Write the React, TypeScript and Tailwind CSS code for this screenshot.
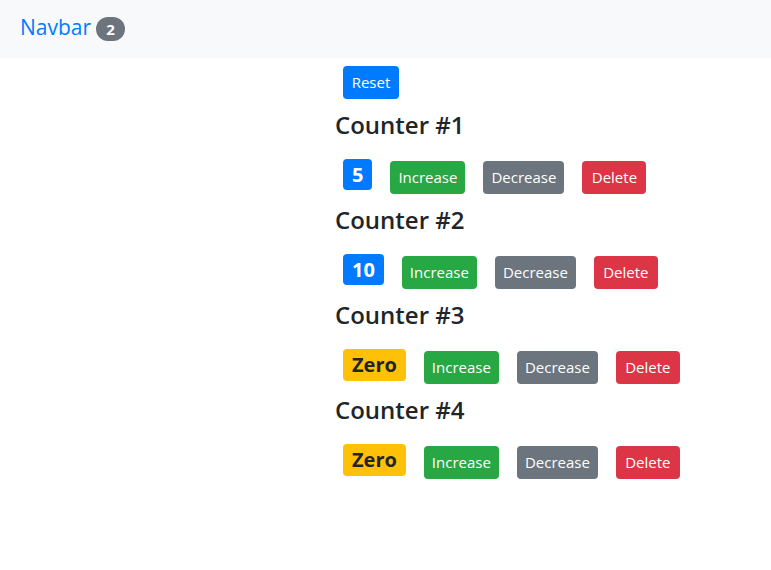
import React, { useState } from 'react';

type Counter = { id: number; value: number };

const font = { fontFamily: '"Open Sans", "Noto Sans", sans-serif' };

const CounterRow: React.FC<{
  counter: Counter;
  onIncrease: (id: number) => void;
  onDecrease: (id: number) => void;
  onDelete: (id: number) => void;
}> = ({ counter, onIncrease, onDecrease, onDelete }) => {
  const zero = counter.value === 0;
  return (
    <div>
      <h4 className="h-[35px] text-[24px] leading-[35px] font-semibold text-[#212529]">
        Counter #{counter.id}
      </h4>
      <div className="flex h-[60px] items-start gap-[18px] pl-2">
        <span
          className={
            zero
              ? 'mt-[17px] flex h-[32px] items-center rounded-[4px] bg-[#ffc107] px-[9px] text-[20px] font-bold leading-none text-[#212529]'
              : 'mt-[17px] flex h-[31px] items-center rounded-[4px] bg-[#007bff] px-[9px] text-[20px] font-bold leading-none text-white'
          }
        >
          {zero ? 'Zero' : counter.value}
        </span>
        <button
          onClick={() => onIncrease(counter.id)}
          className="mt-[19px] h-[33px] w-[75px] rounded-[4px] bg-[#28a745] text-[15px] text-white"
        >
          Increase
        </button>
        <button
          onClick={() => onDecrease(counter.id)}
          className="mt-[19px] h-[33px] w-[81px] rounded-[4px] bg-[#6c757d] text-[15px] text-white"
        >
          Decrease
        </button>
        <button
          onClick={() => onDelete(counter.id)}
          className="mt-[19px] h-[33px] w-[64px] rounded-[4px] bg-[#dc3545] text-[15px] text-white"
        >
          Delete
        </button>
      </div>
    </div>
  );
};

export default function App() {
  const [counters, setCounters] = useState<Counter[]>([
    { id: 1, value: 5 },
    { id: 2, value: 10 },
    { id: 3, value: 0 },
    { id: 4, value: 0 },
  ]);

  const increase = (id: number) =>
    setCounters(counters.map((c) => (c.id === id ? { ...c, value: c.value + 1 } : c)));
  const decrease = (id: number) =>
    setCounters(counters.map((c) => (c.id === id ? { ...c, value: c.value - 1 } : c)));
  const remove = (id: number) => setCounters(counters.filter((c) => c.id !== id));
  const reset = () => setCounters(counters.map((c) => ({ ...c, value: 0 })));

  return (
    <div className="min-h-[570px] bg-white" style={font}>
      <nav className="flex h-[58px] items-center bg-[#f8f9fa] px-5">
        <a href="#" className="pb-[4px] text-[21px] leading-none text-[#007bff]">
          Navbar
        </a>
        <span className="ml-[5px] flex h-[24px] w-[29px] items-center justify-center rounded-full bg-[#6c757d] text-[15px] font-bold text-white">
          {counters.filter((c) => c.value > 0).length}
        </span>
      </nav>
      <main className="pl-[335px]">
        <div className="h-[49px] pl-2 pt-2">
          <button
            onClick={reset}
            className="h-[33px] w-[56px] rounded-[4px] bg-[#007bff] text-[15px] text-white"
          >
            Reset
          </button>
        </div>
        {counters.map((c) => (
          <CounterRow
            key={c.id}
            counter={c}
            onIncrease={increase}
            onDecrease={decrease}
            onDelete={remove}
          />
        ))}
      </main>
    </div>
  );
}
